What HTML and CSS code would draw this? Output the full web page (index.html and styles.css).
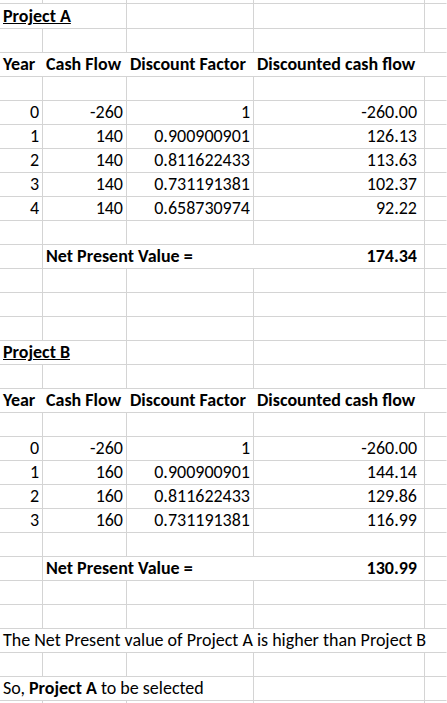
FILE: index.html
```html
<!DOCTYPE html>
<html lang="en">
<head>
    <meta charset="UTF-8">
    <meta name="viewport" content="width=device-width, initial-scale=1.0">
    <title>NPV - Project A vs Project B</title>
    <link rel="stylesheet" href="styles.css">
</head>
<body>
    <div class="sheet">
        <!-- sisa baris di atas -->
        <div class="row stub"><div class="c"></div><div class="c"></div><div class="c"></div><div class="c"></div><div class="c"></div></div>

        <!-- Project A -->
        <div class="row"><div class="c span2 b u">Project A</div><div class="c"></div><div class="c"></div><div class="c"></div></div>
        <div class="row"><div class="c"></div><div class="c"></div><div class="c"></div><div class="c"></div><div class="c"></div></div>
        <div class="row head">
            <div class="c b nr">Year</div><div class="c b nr">Cash Flow</div><div class="c b nr">Discount Factor</div><div class="c b nr">Discounted cash flow</div><div class="c nr"></div>
        </div>
        <div class="row"><div class="c"></div><div class="c"></div><div class="c"></div><div class="c"></div><div class="c"></div></div>
        <div class="row"><div class="c r">0</div><div class="c r">-260</div><div class="c r">1</div><div class="c r num">-260.00</div><div class="c"></div></div>
        <div class="row"><div class="c r">1</div><div class="c r">140</div><div class="c r">0.900900901</div><div class="c r num">126.13</div><div class="c"></div></div>
        <div class="row"><div class="c r">2</div><div class="c r">140</div><div class="c r">0.811622433</div><div class="c r num">113.63</div><div class="c"></div></div>
        <div class="row"><div class="c r">3</div><div class="c r">140</div><div class="c r">0.731191381</div><div class="c r num">102.37</div><div class="c"></div></div>
        <div class="row"><div class="c r">4</div><div class="c r">140</div><div class="c r">0.658730974</div><div class="c r num">92.22</div><div class="c"></div></div>
        <div class="row"><div class="c"></div><div class="c"></div><div class="c"></div><div class="c"></div><div class="c"></div></div>
        <div class="row"><div class="c"></div><div class="c span2 b nr">Net Present Value =</div><div class="c r num b">174.34</div><div class="c"></div></div>
        <div class="row"><div class="c"></div><div class="c"></div><div class="c"></div><div class="c"></div><div class="c"></div></div>
        <div class="row"><div class="c"></div><div class="c"></div><div class="c"></div><div class="c"></div><div class="c"></div></div>
        <div class="row"><div class="c"></div><div class="c"></div><div class="c"></div><div class="c"></div><div class="c"></div></div>

        <!-- Project B -->
        <div class="row"><div class="c span2 b u">Project B</div><div class="c"></div><div class="c"></div><div class="c"></div></div>
        <div class="row"><div class="c"></div><div class="c"></div><div class="c"></div><div class="c"></div><div class="c"></div></div>
        <div class="row head">
            <div class="c b nr">Year</div><div class="c b nr">Cash Flow</div><div class="c b nr">Discount Factor</div><div class="c b nr">Discounted cash flow</div><div class="c nr"></div>
        </div>
        <div class="row"><div class="c"></div><div class="c"></div><div class="c"></div><div class="c"></div><div class="c"></div></div>
        <div class="row"><div class="c r">0</div><div class="c r">-260</div><div class="c r">1</div><div class="c r num">-260.00</div><div class="c"></div></div>
        <div class="row"><div class="c r">1</div><div class="c r">160</div><div class="c r">0.900900901</div><div class="c r num">144.14</div><div class="c"></div></div>
        <div class="row"><div class="c r">2</div><div class="c r">160</div><div class="c r">0.811622433</div><div class="c r num">129.86</div><div class="c"></div></div>
        <div class="row"><div class="c r">3</div><div class="c r">160</div><div class="c r">0.731191381</div><div class="c r num">116.99</div><div class="c"></div></div>
        <div class="row"><div class="c"></div><div class="c"></div><div class="c"></div><div class="c"></div><div class="c"></div></div>
        <div class="row"><div class="c"></div><div class="c span2 b nr">Net Present Value =</div><div class="c r num b">130.99</div><div class="c"></div></div>
        <div class="row"><div class="c"></div><div class="c"></div><div class="c"></div><div class="c"></div><div class="c"></div></div>
        <div class="row"><div class="c"></div><div class="c"></div><div class="c"></div><div class="c"></div><div class="c"></div></div>

        <!-- kesimpulan -->
        <div class="row"><div class="c span5">The Net Present value of Project A is higher than Project B</div></div>
        <div class="row"><div class="c"></div><div class="c"></div><div class="c"></div><div class="c"></div><div class="c"></div></div>
        <div class="row"><div class="c span3">So, <strong>Project A</strong> to be selected</div><div class="c"></div><div class="c"></div></div>
        <div class="row stub"><div class="c"></div><div class="c"></div><div class="c"></div><div class="c"></div><div class="c"></div></div>
    </div>
</body>
</html>
```

FILE: styles.css
```css
body {
    margin: 0;
    background-color: #fff;
    font-family: Carlito, Calibri, Lato, sans-serif;
    font-size: 18px;
    color: #000;
}
.sheet {
    width: 447px;
    height: 703px;
    overflow: hidden;
}
.row {
    display: grid;
    grid-template-columns: 43px 84px 127px 171px 1fr;
    height: 24px;
}
.row.stub {
    height: 4px;
}
.c {
    border-right: 1px solid #d4d4d4;
    border-bottom: 1px solid #d4d4d4;
    padding: 1px 3px 0 3px;
    white-space: nowrap;
    line-height: 22px;
    height: 23px;
    min-width: 0;
}
.stub .c {
    height: 3px;
    padding: 0;
}
.row > .c:last-child {
    border-right-color: transparent;
}
.r {
    text-align: right;
}
.num {
    padding-right: 7px;
}
.b {
    font-weight: bold;
}
.u {
    text-decoration: underline;
}
.nr {
    border-right-color: transparent;
}
.span2 {
    grid-column: span 2;
}
.span3 {
    grid-column: span 3;
}
.span5 {
    grid-column: span 5;
}
```
